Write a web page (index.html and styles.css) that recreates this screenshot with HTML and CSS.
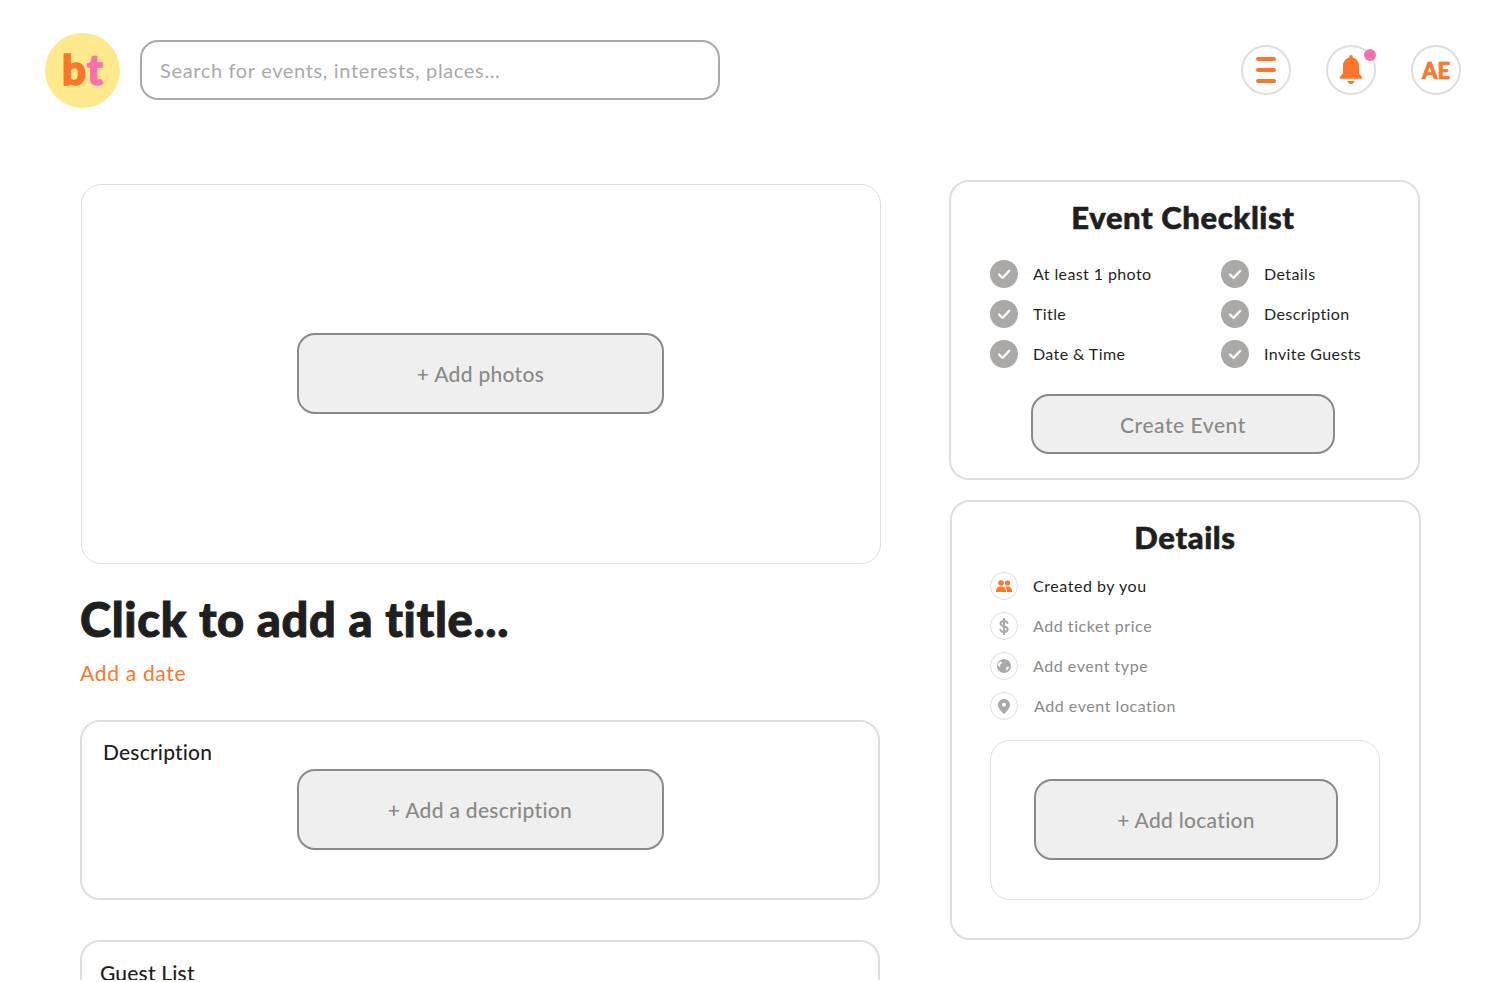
FILE: index.html
```html
<!DOCTYPE html>
<html lang="en">
<head>
    <meta charset="UTF-8">
    <title>Create Event</title>
    <link rel="stylesheet" href="styles.css">
</head>
<body>
    <div class="page">
        <header class="topbar">
            <div class="logo"><span class="logo-b">b</span><span class="logo-t">t</span></div>
            <div class="search">Search for events, interests, places...</div>
            <div class="top-icons">
                <div class="round-btn">
                    <svg width="20" height="26" viewBox="0 0 20 26"><rect y="0" width="20" height="4" rx="2" fill="#fb752a"/><rect y="11" width="20" height="4" rx="2" fill="#fb752a"/><rect y="22" width="20" height="4" rx="2" fill="#fb752a"/></svg>
                </div>
                <div class="round-btn">
                    <svg width="24" height="30" viewBox="0 0 24 30"><path d="M12 0c1 0 1.700.8 1.700 1.800v.6C17.800 3.400 20 7 20 11v7.500l3.200 3.500c.6.800.2 1.700-.8 1.700H1.600c-1 0-1.400-.9-.8-1.700L4 18.500V11c0-4 2.200-7.600 6.300-8.600v-.6C10.300.8 11 0 12 0z" fill="#fb752a"/><path d="M8.500 26h7c0 1.500-1.500 3-3.500 3s-3.500-1.500-3.500-3z" fill="#fb752a"/></svg>
                    <span class="badge"></span>
                </div>
                <div class="round-btn avatar">AE</div>
            </div>
        </header>

        <main class="layout">
            <section class="left">
                <div class="photo-card">
                    <button class="add-btn wide">+ Add photos</button>
                </div>
                <h1 class="event-title">Click to add a title...</h1>
                <a class="add-date">Add a date</a>
                <div class="card desc-card">
                    <h3>Description</h3>
                    <button class="add-btn wide">+ Add a description</button>
                </div>
                <div class="card guest-card">
                    <h3>Guest List</h3>
                </div>
            </section>

            <aside class="right">
                <div class="card checklist">
                    <h2>Event Checklist</h2>
                    <ul class="check-grid">
                        <li><svg class="check" viewBox="0 0 28 28"><circle cx="14" cy="14" r="14" fill="#aaa9a7"/><path d="M9 14.500l3.500 3.500 6.500-7" fill="none" stroke="#fff" stroke-width="2.400" stroke-linecap="round" stroke-linejoin="round"/></svg>At least 1 photo</li>
                        <li><svg class="check" viewBox="0 0 28 28"><circle cx="14" cy="14" r="14" fill="#aaa9a7"/><path d="M9 14.500l3.500 3.500 6.500-7" fill="none" stroke="#fff" stroke-width="2.400" stroke-linecap="round" stroke-linejoin="round"/></svg>Details</li>
                        <li><svg class="check" viewBox="0 0 28 28"><circle cx="14" cy="14" r="14" fill="#aaa9a7"/><path d="M9 14.500l3.500 3.500 6.500-7" fill="none" stroke="#fff" stroke-width="2.400" stroke-linecap="round" stroke-linejoin="round"/></svg>Title</li>
                        <li><svg class="check" viewBox="0 0 28 28"><circle cx="14" cy="14" r="14" fill="#aaa9a7"/><path d="M9 14.500l3.500 3.500 6.500-7" fill="none" stroke="#fff" stroke-width="2.400" stroke-linecap="round" stroke-linejoin="round"/></svg>Description</li>
                        <li><svg class="check" viewBox="0 0 28 28"><circle cx="14" cy="14" r="14" fill="#aaa9a7"/><path d="M9 14.500l3.500 3.500 6.500-7" fill="none" stroke="#fff" stroke-width="2.400" stroke-linecap="round" stroke-linejoin="round"/></svg>Date &amp; Time</li>
                        <li><svg class="check" viewBox="0 0 28 28"><circle cx="14" cy="14" r="14" fill="#aaa9a7"/><path d="M9 14.500l3.500 3.500 6.500-7" fill="none" stroke="#fff" stroke-width="2.400" stroke-linecap="round" stroke-linejoin="round"/></svg>Invite Guests</li>
                    </ul>
                    <button class="add-btn short create">Create Event</button>
                </div>

                <div class="card details">
                    <h2>Details</h2>
                    <ul class="detail-list">
                        <li class="done">
                            <span class="detail-icon"><svg width="16" height="12" viewBox="0 0 16 12" fill="#fb752a"><circle cx="5" cy="3" r="2.800"/><circle cx="11.500" cy="3" r="2.600"/><path d="M0 11c0-3 2-4.500 5-4.500s5 1.500 5 4.500v1H0z"/><path d="M11 6.500c3 0 5 1.500 5 4.500v1h-5c0-2-.5-4-1.800-5.200.5-.2 1.100-.3 1.800-.3z"/></svg></span>
                            Created by you
                        </li>
                        <li>
                            <span class="detail-icon"><svg width="10" height="17" viewBox="0 0 10 17"><path d="M8.500 5C8 3.600 6.700 3 5 3 3 3 1.500 4 1.500 5.500S3 7.700 5 8.300s3.600 1.300 3.600 3-1.600 2.700-3.600 2.700c-1.800 0-3.100-.7-3.600-2.200M5 .8v15.400" fill="none" stroke="#aaa9a7" stroke-width="2" stroke-linecap="round"/></svg></span>
                            Add ticket price
                        </li>
                        <li>
                            <span class="detail-icon"><svg width="14" height="14" viewBox="0 0 14 14"><circle cx="7" cy="7" r="7" fill="#aaa9a7"/><path d="M1.500 4l2-1.500 1.500 1-.5 1.500-1.500.5.500 2-1 .5L1 6zM10 7.500l2 .5-1 2.500-1.500 1-.5-2z" fill="#fff"/></svg></span>
                            Add event type
                        </li>
                        <li>
                            <span class="detail-icon"><svg width="12" height="15" viewBox="0 0 12 15"><path d="M6 0c3.300 0 6 2.500 6 5.700C12 9.500 8 13 6 15 4 13 0 9.500 0 5.700 0 2.500 2.700 0 6 0z" fill="#aaa9a7"/><circle cx="6" cy="5.700" r="2" fill="#fff"/></svg></span>
                            <span class="shift">Add event location</span>
                        </li>
                    </ul>
                    <div class="location-box">
                        <button class="add-btn loc">+ Add location</button>
                    </div>
                </div>
            </aside>
        </main>
    </div>
</body>
</html>
```

FILE: styles.css
```css
* {
    box-sizing: border-box;
}

body {
    margin: 0;
    background: white;
    font-family: Lato, "Open Sans", sans-serif;
    color: #1f1f1f;
}

.page {
    height: 980px;
    overflow: hidden;
}

.topbar {
    display: flex;
    align-items: flex-start;
    padding: 33px 51px 0 45px;
}

.logo {
    width: 75px;
    height: 75px;
    border-radius: 50%;
    background: #ffe98d;
    display: flex;
    align-items: center;
    justify-content: center;
    font-size: 42px;
    font-weight: 900;
    line-height: 1;
    padding-bottom: 4px;
    -webkit-text-stroke: 1.5px;
}

.logo-b {
    color: #fb752a;
}

.logo-t {
    margin-left: 1px;
    color: #ff6fae;
}

.search {
    width: 580px;
    height: 60px;
    margin: 7px 0 0 20px;
    padding-left: 18px;
    border: 2px solid #aaa9a7;
    border-radius: 18px;
    display: flex;
    align-items: center;
    font-size: 20px;
    letter-spacing: 0.65px;
    color: #aaa9a7;
}

.top-icons {
    margin: 12px 0 0 auto;
    display: flex;
    gap: 35px;
}

.round-btn {
    position: relative;
    width: 50px;
    height: 50px;
    border: 2px solid #dedede;
    border-radius: 50%;
    display: flex;
    align-items: center;
    justify-content: center;
}

.badge {
    position: absolute;
    top: 2px;
    right: -2px;
    width: 12px;
    height: 12px;
    border-radius: 50%;
    background: #ff6fae;
}

.avatar {
    font-size: 22px;
    font-weight: 900;
    color: #fb752a;
    -webkit-text-stroke: 0.6px;
}

.layout {
    display: grid;
    grid-template-columns: 800px 471px;
    column-gap: 70px;
    padding: 72px 0 0 80px;
}

.left {
    padding-top: 4px;
}

.card {
    border: 2px solid #dedede;
    border-radius: 20px;
    background: white;
}

.card h3 {
    margin: 0;
    font-size: 21px;
    font-weight: 500;
    letter-spacing: 0.2px;
}

.add-btn {
    display: block;
    margin: 0 auto;
    border: 2px solid #8a8987;
    border-radius: 18px;
    background: #f0eff0;
    color: #8a8987;
    font-family: inherit;
    font-size: 21px;
    font-weight: 500;
    letter-spacing: 0.3px;
}

.add-btn.wide {
    width: 367px;
    height: 81px;
}

.add-btn.short {
    width: 304px;
    height: 60px;
    letter-spacing: 0.55px;
}

.photo-card {
    width: 800px;
    margin-left: 1px;
    height: 380px;
    padding: 0 1px 1px 0;
    border: 1px solid #dedede;
    border-radius: 20px;
    display: flex;
    align-items: center;
}

.event-title {
    margin: 26px 0 0;
    font-size: 47px;
    font-weight: 900;
    line-height: 58px;
    letter-spacing: 0.7px;
    -webkit-text-stroke: 1px;
    color: #1f1f1f;
}

.add-date {
    display: block;
    margin-top: 12px;
    font-size: 21px;
    line-height: 26px;
    letter-spacing: 0.7px;
    color: #fb752a;
}

.desc-card {
    margin-top: 34px;
    height: 180px;
    padding: 17px 21px;
}

.desc-card h3 {
    line-height: 25px;
}

.desc-card .add-btn {
    margin-top: 5px;
}

.guest-card {
    margin-top: 40px;
    height: 100px;
    padding: 18px 18px;
}

.right h2 {
    margin: 0;
    text-align: center;
    font-size: 31px;
    font-weight: 900;
    line-height: 38px;
    letter-spacing: 0.6px;
    -webkit-text-stroke: 0.6px;
}

.checklist {
    width: 471px;
    margin-left: -1px;
    height: 300px;
    padding: 16px 42px 0 39px;
}

.check-grid {
    list-style: none;
    margin: 23px 0 0;
    padding: 0;
    display: grid;
    grid-template-columns: 231px 1fr;
    row-gap: 12px;
}

.check-grid li {
    display: flex;
    align-items: center;
    gap: 15px;
    height: 28px;
    font-size: 16px;
    letter-spacing: 0.4px;
}

.check {
    width: 28px;
    height: 28px;
    margin-top: 2px;
    flex: none;
}

.create {
    margin-top: 27px;
}

.details {
    margin-top: 20px;
    height: 440px;
    padding: 16px 39px 0 38px;
}

.detail-list {
    list-style: none;
    margin: 15px 0 0;
    padding: 0;
}

.detail-list li {
    display: flex;
    align-items: center;
    gap: 15px;
    height: 28px;
    margin-bottom: 12px;
    font-size: 16px;
    letter-spacing: 0.55px;
    color: #8a8987;
}

.detail-list li.done {
    color: #1f1f1f;
}

.detail-icon {
    width: 28px;
    height: 28px;
    margin-top: 2px;
    flex: none;
    border: 1px solid #dedede;
    border-radius: 50%;
    display: flex;
    align-items: center;
    justify-content: center;
}

.shift {
    margin-left: 1px;
}

.location-box {
    height: 160px;
    margin-top: 21px;
    padding: 0 0 2px 43px;
    border: 1px solid #dedede;
    border-radius: 20px;
    display: flex;
    align-items: center;
}

.add-btn.loc {
    width: 304px;
    height: 81px;
    margin: 0;
}
```
